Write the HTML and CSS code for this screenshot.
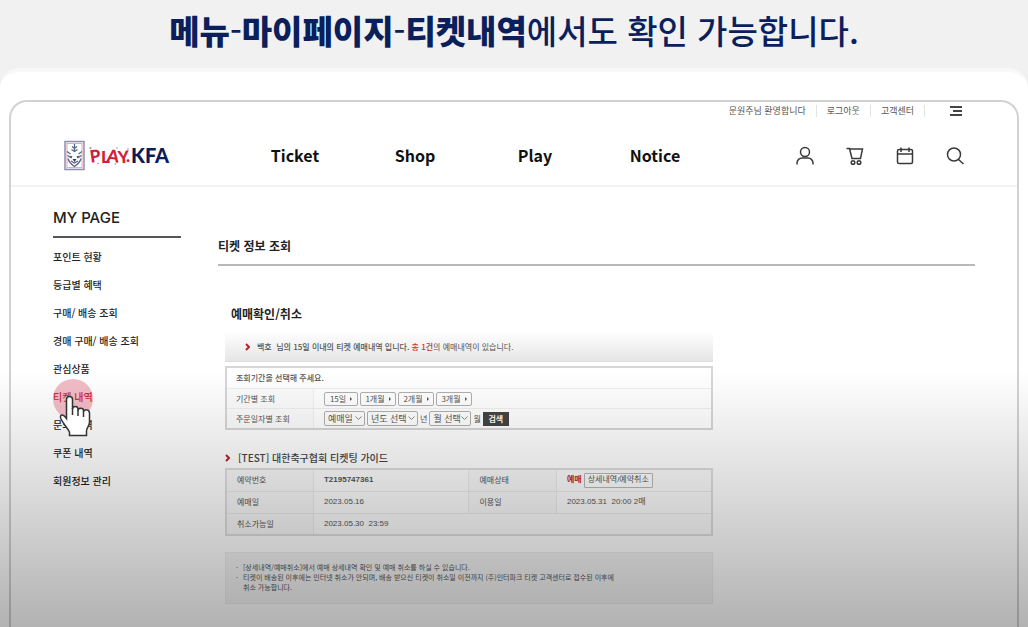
FILE: index.html
```html
<!DOCTYPE html>
<html lang="ko">
<head>
<meta charset="utf-8">
<meta name="viewport" content="width=device-width, initial-scale=1">
<title>PLAY KFA - 티켓 정보 조회</title>
<link rel="stylesheet" href="styles.css">
</head>
<body>
<div class="stage">
  <h1 class="caption"><strong>메뉴</strong>-<strong>마이페이지</strong>-<strong>티켓내역</strong>에서도 확인 가능합니다.</h1>
  <div class="sheet">
    <div class="frame">
      <header class="header">
        <div class="utility">
          <span class="utility-item">문원주님 환영합니다</span>
          <a class="utility-item" href="#">로그아웃</a>
          <a class="utility-item" href="#">고객센터</a>
          <button class="icon-button menu-button" type="button" aria-label="전체 메뉴">
            <svg width="14" height="12" viewBox="0 0 14 12" fill="none" stroke="#444" stroke-width="2"><path d="M1 2h12M4 6h9M1 10h12"/></svg>
          </button>
        </div>
        <div class="bar">
          <a class="logo" href="#" aria-label="PLAY KFA">
            <svg width="106" height="32" viewBox="0 0 106 32">
              <rect x="1" y="1.5" width="19" height="28" fill="#f5f3f7" stroke="#8d8fb0" stroke-width="1.5"/>
              <rect x="3" y="3.5" width="15" height="24" fill="#fff" stroke="#e3abb6"/>
              <g fill="none" stroke="#5c668c" stroke-width="1.3">
                <path d="M10.500 4v8M8 6.500l2.500 2 2.500-2M7.500 9.500l3 2 3-2"/>
                <path d="M3 11.500l3.500 2.500M18 11.500L14.500 14M3.500 15.500l4 2.500M17.500 15.500l-4 2.500"/>
                <path d="M4 18.500c1 4 3.500 6 6.500 8 3-2 5.500-4 6.500-8M7 21l3.500 2 3.500-2"/>
              </g>
              <path d="M8.500 19h4l-2 3zM5.500 15.500l3 1-1 1.500zM15.500 15.500l-3 1 1 1.500z" fill="#31406f"/>
              <g class="logo-play">
                <text x="26" y="22" transform="rotate(-8 31 17)">P</text>
                <text x="37" y="23">L</text>
                <text x="43" y="22" transform="rotate(7 49 17)">A</text>
                <text x="54" y="23" transform="rotate(-5 59 17)">Y</text>
                <text x="62" y="22">.</text>
              </g>
              <g fill="#8d96a8"><circle cx="26.500" cy="8" r="1"/><circle cx="34" cy="23.500" r=".8"/><circle cx="53" cy="8" r=".8"/><circle cx="51.500" cy="24" r=".8"/><circle cx="64" cy="9" r=".8"/></g>
              <text class="logo-kfa" x="67" y="23">KFA</text>
            </svg>
          </a>
          <nav class="nav">
            <a href="#">Ticket</a><a href="#">Shop</a><a href="#">Play</a><a href="#">Notice</a>
          </nav>
          <div class="tools">
            <button class="icon-button" type="button" aria-label="마이페이지"><svg width="20" height="20" viewBox="0 0 20 20"><circle cx="10" cy="6" r="4.500"/><path d="M2 18.500v-1.500c0-3 2.500-5 5-5h6c2.500 0 5 2 5 5v1.500"/></svg></button>
            <button class="icon-button" type="button" aria-label="장바구니"><svg width="20" height="20" viewBox="0 0 20 20"><path d="M1.500 2.500h3l2.500 10h8.500l2-9.500H5"/><circle cx="8" cy="16.500" r="1.800"/><circle cx="14" cy="16.500" r="1.800"/></svg></button>
            <button class="icon-button" type="button" aria-label="일정"><svg width="20" height="20" viewBox="0 0 20 20"><rect x="2.500" y="3.500" width="15" height="14" rx="1.500"/><path d="M2.500 8h15M6 1.500V6M14 1.500V6"/></svg></button>
            <button class="icon-button" type="button" aria-label="검색"><svg width="20" height="20" viewBox="0 0 20 20"><circle cx="9" cy="8.500" r="6.500"/><path d="M13.500 13.500l5 4.500"/></svg></button>
          </div>
        </div>
      </header>

      <div class="body">
        <aside class="sidebar">
          <h2 class="sidebar-title">MY PAGE</h2>
          <ul class="side-menu">
            <li><a href="#">포인트 현황</a></li>
            <li><a href="#">등급별 혜택</a></li>
            <li><a href="#">구매/ 배송 조회</a></li>
            <li><a href="#">경매 구매/ 배송 조회</a></li>
            <li><a href="#">관심상품</a></li>
            <li class="current"><a href="#" aria-current="page">티켓 내역</a>
              <svg class="pointer" width="42" height="60" viewBox="0 0 42 60" aria-hidden="true">
                <circle cx="20" cy="20" r="20" fill="#cf2f4a" fill-opacity=".32"/>
                <path d="M13.500 39.500V20.500c0-4 6-4 6 0v9.500c0-3.500 5.500-3.500 5.500 0v1.500c0-3 5.500-3 5.500 0V33c0-3 6-3 6 1v9c0 4-3 6-3 9v4.500H16.500V53c-2-4-6-8-8.500-13-2-5 2-5.500 5.500-.5z" fill="#fff" stroke="#333" stroke-width="1.500"/>
                <path d="M19.500 29v7M25 31v6M30.500 32.500V38" fill="none" stroke="#333" stroke-width="1.500"/>
              </svg>
            </li>
            <li><a href="#">문의 내역</a></li>
            <li><a href="#">쿠폰 내역</a></li>
            <li><a href="#">회원정보 관리</a></li>
          </ul>
        </aside>

        <main class="main">
          <h2 class="main-title">티켓 정보 조회</h2>
          <div class="panel">
            <h3 class="panel-title">예매확인/취소</h3>
            <p class="summary">
              <svg class="arrow" width="5" height="8" viewBox="0 0 5 8"><path d="M1 1l3 3-3 3"/></svg>
              <span><b>백호 &nbsp;님의 15일 이내의 티켓 예매내역 입니다. <em>총 1건</em></b>의 예매내역이 있습니다.</span>
            </p>

            <form class="search">
              <p class="search-head">조회기간을 선택해 주세요.</p>
              <div class="search-row">
                <span class="search-label">기간별 조회</span>
                <div class="search-field">
                  <button class="period" type="button">15일 <i></i></button>
                  <button class="period" type="button">1개월 <i></i></button>
                  <button class="period" type="button">2개월 <i></i></button>
                  <button class="period" type="button">3개월 <i></i></button>
                </div>
              </div>
              <div class="search-row">
                <label class="search-label" for="date-kind">주문일자별 조회</label>
                <div class="search-field">
                  <select id="date-kind" class="pick pick-kind"><option>예매일</option></select>
                  <select id="year" class="pick pick-year"><option>년도 선택</option></select>
                  <label for="year">년</label>
                  <select id="month" class="pick pick-month"><option>월 선택</option></select>
                  <label for="month">월</label>
                  <button class="submit" type="submit">검색</button>
                </div>
              </div>
            </form>

            <h3 class="ticket-title">
              <svg class="arrow" width="5" height="8" viewBox="0 0 5 8"><path d="M1 1l3 3-3 3"/></svg>
              <span>[TEST] 대한축구협회 티켓팅 가이드</span>
            </h3>
            <table class="ticket">
              <colgroup><col class="c1"><col class="c2"><col class="c3"><col class="c4"></colgroup>
              <tr><th scope="row">예약번호</th><td><b>T2195747361</b></td><th scope="row">예매상태</th><td><div class="state"><strong>예매</strong><button class="detail" type="button">상세내역/예약취소</button></div></td></tr>
              <tr><th scope="row">예매일</th><td>2023.05.16</td><th scope="row">이용일</th><td>2023.05.31 &nbsp;20:00 2매</td></tr>
              <tr><th scope="row">취소가능일</th><td colspan="3">2023.05.30 &nbsp;23:59</td></tr>
            </table>

            <ul class="notes">
              <li>[상세내역/예매취소]에서 예매 상세내역 확인 및 예매 취소를 하실 수 있습니다.</li>
              <li>티켓이 배송된 이후에는 인터넷 취소가 안되며, 배송 받으신 티켓이 취소일 이전까지 (주)인터파크 티켓 고객센터로 접수된 이후에<br>취소 가능합니다.</li>
            </ul>
          </div>
        </main>
      </div>
    </div>
  </div>
</div>
</body>
</html>
```
FILE: styles.css
```css
* { box-sizing: border-box; }
body, h1, h2, h3, p, ul { margin: 0; padding: 0; }
ul { list-style: none; }
a { color: inherit; text-decoration: none; }
button, select { font: inherit; color: inherit; margin: 0; }

body {
  background: #f1f1f1;
  color: #222;
  font-family: "Noto Sans CJK KR", sans-serif;
}

.stage {
  position: relative;
  display: flex;
  flex-direction: column;
  min-height: 100vh;
}
.stage::after {
  content: "";
  position: absolute;
  inset: auto 0 0;
  height: 256px;
  background: linear-gradient(rgba(0, 0, 0, 0), rgba(0, 0, 0, .3));
  pointer-events: none;
}

.caption {
  height: 68px;
  padding-top: 6px;
  color: #0a1f5c;
  font-size: 33px;
  line-height: 48px;
  font-weight: 500;
  text-align: center;
  white-space: nowrap;
}
.caption strong { font-weight: 900; }

.sheet {
  flex: 1;
  display: flex;
  padding: 28px 9px 0;
  background: #fff;
  border-top: 4px solid #f8f8f8;
  border-radius: 20px 20px 0 0;
}
.frame {
  flex: 1;
  border: 2px solid #d2d2d2;
  border-bottom: 0;
  border-radius: 18px 18px 0 0;
}

.header { border-bottom: 2px solid #f3f3f3; }
.utility {
  display: flex;
  align-items: center;
  justify-content: flex-end;
  height: 18px;
  padding-right: 54px;
  color: #555;
  font-size: 9px;
  line-height: 12px;
}
.utility-item {
  padding-right: 10px;
  margin-right: 10px;
  border-right: 1px solid #e2e2e2;
}
.menu-button { margin-left: 14px; }
.icon-button {
  display: flex;
  padding: 0;
  background: none;
  border: 0;
}
.bar {
  display: flex;
  align-items: center;
  height: 65px;
  padding: 6px 52px 0 53px;
}
.logo { display: flex; width: 171px; }
.logo-play {
  fill: #d0213c;
  font: 900 17px Lato, sans-serif;
}
.logo-kfa {
  fill: #0d1b58;
  font: 900 20px Lato, sans-serif;
}
.nav {
  display: grid;
  grid-template-columns: repeat(4, 120px);
  padding-bottom: 2px;
  color: #111;
  font-size: 16px;
  line-height: 24px;
  font-weight: 700;
  text-align: center;
}
.tools {
  display: flex;
  gap: 30px;
  margin-left: auto;
}
.tools svg {
  fill: none;
  stroke: #3a3a3a;
  stroke-width: 1.5;
}

.body {
  display: flex;
  gap: 37px;
  padding: 20px 42px 20px;
}
.sidebar { flex: 0 0 128px; }
.sidebar-title {
  height: 31px;
  border-bottom: 2px solid #555;
  font: 500 15px/22px Inter, sans-serif;
}
.side-menu {
  padding-top: 5px;
  font-size: 10px;
  line-height: 28px;
  font-weight: 500;
}
.current { position: relative; color: #c01f3b; }
.pointer {
  position: absolute;
  left: 0;
  top: -4px;
  z-index: 1;
}

.main { flex: 1; min-width: 0; }
.main-title {
  height: 59px;
  padding-top: 28px;
  border-bottom: 2px solid #b9b9b9;
  font-size: 12px;
  line-height: 22px;
  font-weight: 700;
}
.panel {
  max-width: 488px;
  margin: 37px 0 0 7px;
  color: #555;
  font-size: 8px;
  line-height: 12px;
}
.panel-title {
  padding: 0 6px 6px;
  color: #222;
  font-size: 12px;
  line-height: 22px;
  font-weight: 700;
}
.arrow {
  flex: none;
  fill: none;
  stroke: #b3262b;
  stroke-width: 2;
}
.summary {
  display: flex;
  align-items: center;
  gap: 7px;
  height: 31px;
  padding: 2px 0 0 20px;
  background: linear-gradient(#fff, #e6e6e6);
  border-bottom: 1px solid #dcdcdc;
}
.summary b { font-weight: 500; }
.summary em { color: #c8322f; font-style: normal; }

.search {
  margin-top: 4px;
  border: 2px solid #d6d6d6;
  background: #fff;
}
.search-head {
  padding: 4px 9px;
  font-weight: 500;
}
.search-row {
  display: flex;
  border-top: 1px solid #efefef;
}
.search-label {
  width: 87px;
  padding: 4px 9px 3px;
  border-right: 1px solid #efefef;
  background: #fcfcfc;
}
.search-field {
  display: flex;
  align-items: center;
  gap: 2px;
  padding-left: 10px;
}
.period {
  display: flex;
  align-items: center;
  justify-content: center;
  gap: 4px;
  width: 36px;
  height: 14px;
  padding: 0;
  background: #fff;
  border: 1px solid #b0b0b0;
  border-radius: 2px;
}
.period:first-child { width: 34px; }
.period i {
  border: 2px solid transparent;
  border-left-color: #555;
  border-right: 0;
}
.pick {
  appearance: none;
  height: 15px;
  padding: 0 3px;
  background: #fff url("data:image/svg+xml,%3Csvg xmlns='http://www.w3.org/2000/svg' width='7' height='5'%3E%3Cpath d='M.5.5l3 3 3-3' fill='none' stroke='%23888'/%3E%3C/svg%3E") no-repeat right 2px center;
  border: 1px solid #b0b0b0;
  border-radius: 2px;
  font-size: 9px;
  line-height: 12px;
}
.pick-kind { width: 41px; }
.pick-year { width: 51px; }
.pick-month { width: 42px; }
.submit {
  width: 26px;
  height: 14px;
  padding: 0;
  background: #444;
  border: 0;
  color: #fff;
  font-weight: 700;
}

.ticket-title {
  display: flex;
  align-items: center;
  gap: 8px;
  margin: 20px 0 2px;
  color: #444;
  font-size: 10px;
  line-height: 16px;
  font-weight: 500;
}
.ticket {
  width: 100%;
  table-layout: fixed;
  border-collapse: collapse;
  border: 2px solid #dedede;
}
.c1, .c3 { width: 18%; }
.c2, .c4 { width: 32%; }
.ticket th, .ticket td {
  height: 22px;
  padding: 0 10px;
  border: 1px solid #eaeaea;
  font-weight: 400;
  text-align: left;
}
.ticket th { background: #f8f8f8; }
.ticket td {
  font-family: "Liberation Sans", "Noto Sans CJK KR", sans-serif;
  background: #fcfcfc;
}
.ticket b { font-weight: 700; }
.state {
  display: flex;
  align-items: center;
  gap: 2px;
}
.state strong { color: #c4242b; font-weight: 700; }
.detail {
  height: 15px;
  padding: 0 3px;
  background: #fff;
  border: 1px solid #b8b8b8;
  border-radius: 1px;
}

.notes {
  margin-top: 16px;
  padding: 9px 10px 11px;
  background: #f4f4f4;
  border: 1px solid #ededed;
  font-size: 7px;
  line-height: 10px;
}
.notes li { padding-left: 7px; }
.notes li::before {
  content: "·";
  float: left;
  margin-left: -7px;
}
```
